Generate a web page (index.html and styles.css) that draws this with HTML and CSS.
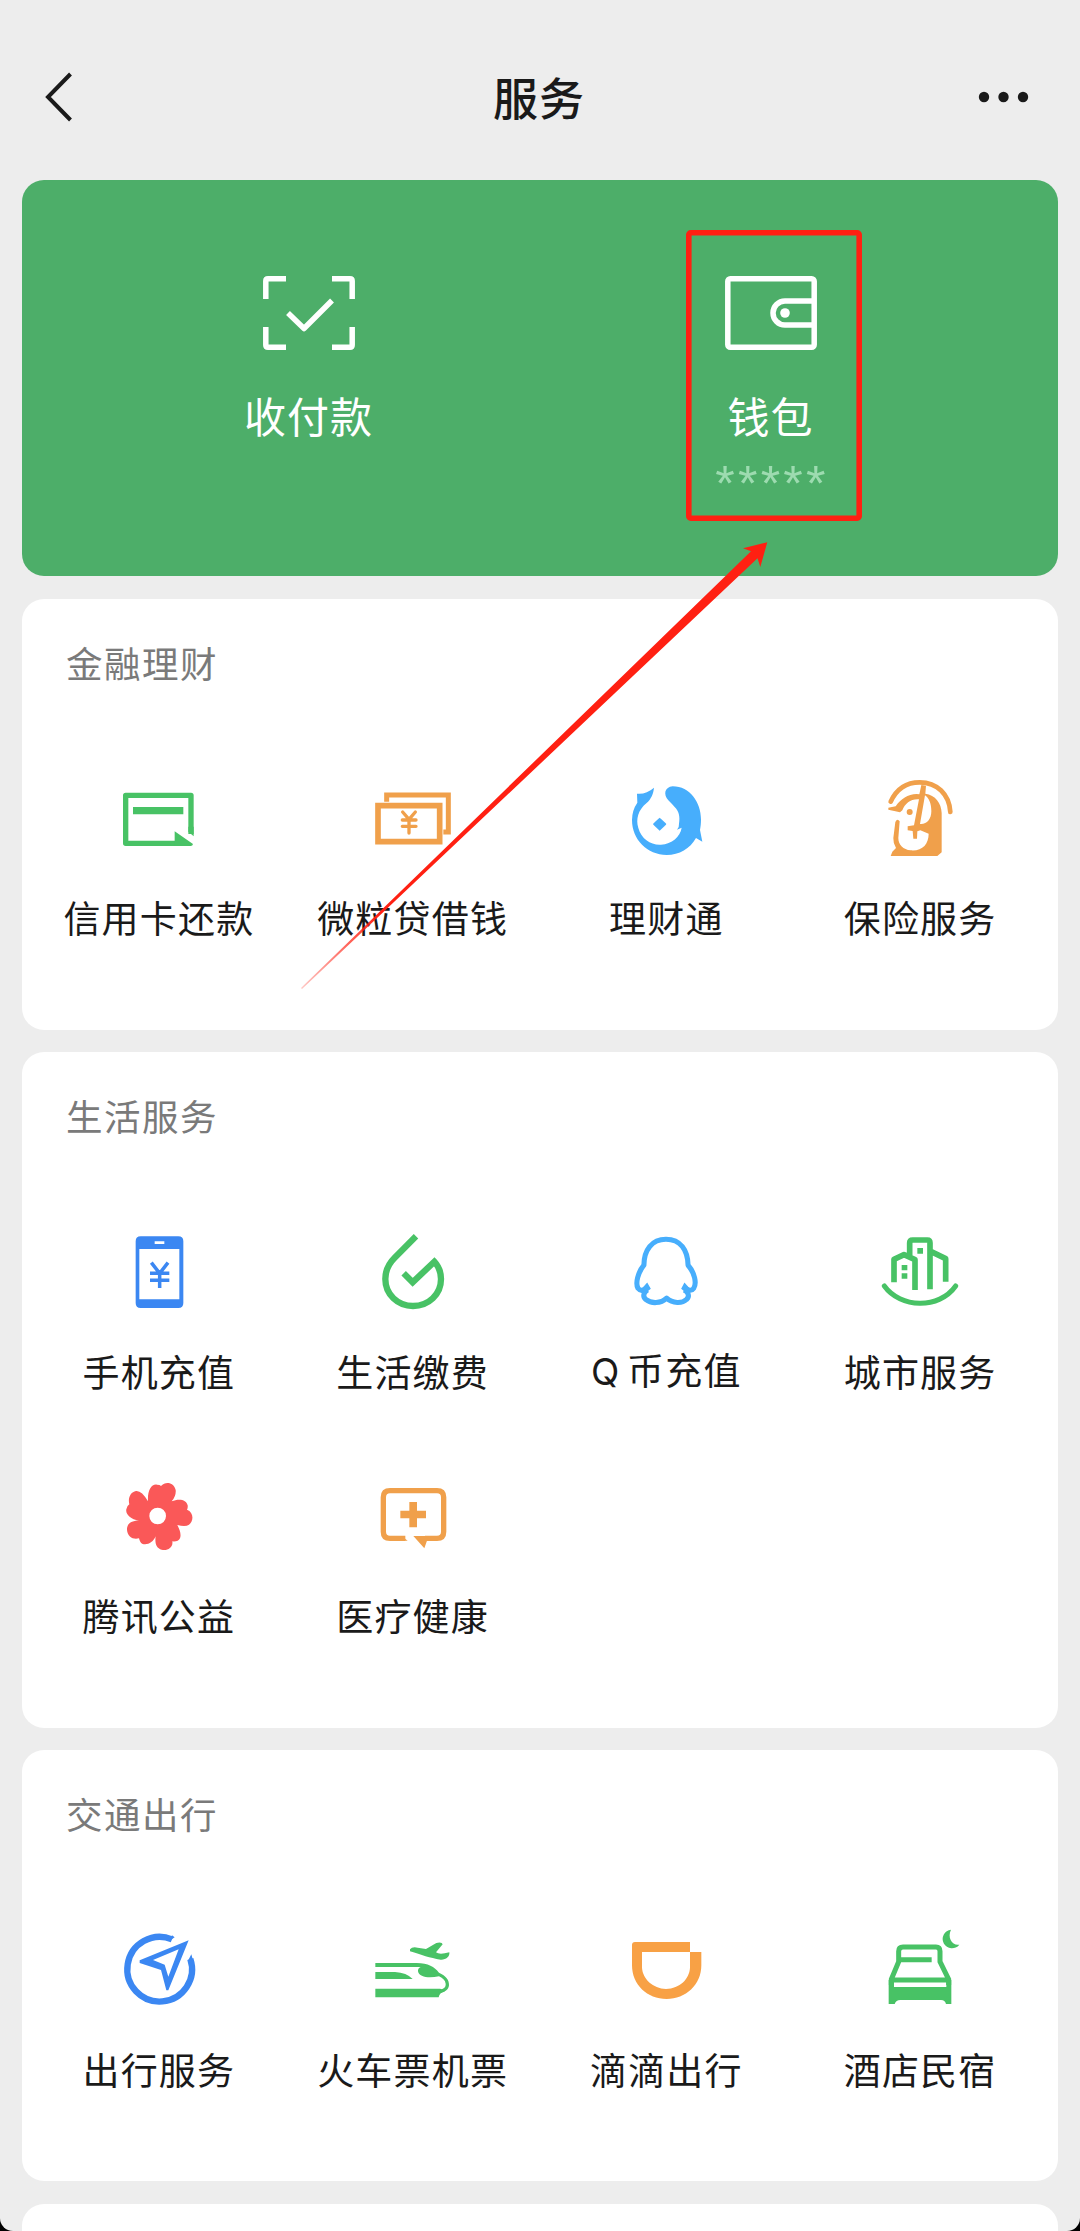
FILE: index.html
```html
<!DOCTYPE html>
<html lang="zh-CN">
<head>
<meta charset="utf-8">
<title>服务</title>
<link rel="stylesheet" href="styles.css">
</head>
<body>
<div class="screen">
  <header class="navbar">
    <svg class="back" viewBox="0 0 30 50"><path d="M26.500 2 4 25 26.500 48"/></svg>
    <h1>服务</h1>
    <svg class="more" viewBox="0 0 52 12"><circle cx="6" cy="6" r="5.200"/><circle cx="25.500" cy="6" r="5.200"/><circle cx="45" cy="6" r="5.200"/></svg>
  </header>

  <main class="cards">
    <section class="hero">
      <div class="hero-item">
        <svg viewBox="0 0 92 74"><path d="M2.800 23V5q0-2.200 2.200-2.200H23M69 2.800H87q2.200 0 2.200 2.200V23M89.200 51V69q0 2.200-2.200 2.200H69M23 71.200H5q-2.200 0-2.200-2.200V51"/><path stroke-linejoin="round" d="M25 37 41 52.500 69 24.500"/></svg>
        <span class="hero-label">收付款</span>
      </div>
      <div class="hero-item">
        <svg viewBox="0 0 92 74"><rect x="2.800" y="2.800" width="86.400" height="68.400" rx="2.500"/><path d="M89 25H60a11.700 11.700 0 0 0 0 24H89"/><circle class="dot" cx="60" cy="37" r="4.800"/></svg>
        <span class="hero-label">钱包</span>
        <span class="balance">*****</span>
      </div>
    </section>

    <section class="card">
      <h2>金融理财</h2>
      <div class="grid">
        <div class="item">
          <svg class="green" viewBox="219 39 270 270"><path class="line" stroke-width="16" stroke-linejoin="round" d="M453 222V106H257V250H410"/><path d="M279 141H430V163H279ZM404 214 459 252Q458 258 452 258H404ZM445 215 461 229V200H445Z"/></svg>
          <span>信用卡还款</span>
        </div>
        <div class="item">
          <svg class="orange" viewBox="981 39 270 270"><path class="line" stroke-width="17" d="M1014 137H1199V245H1014Z"/><path class="line" stroke-width="15" d="M1040 125V105H1225V216H1210"/><path class="line" stroke-width="10" stroke-linecap="round" d="M1088 156 1107 178 1126 156M1107 178V219M1087 180H1128M1087 199H1128"/></svg>
          <span>微粒贷借钱</span>
        </div>
        <div class="item">
          <svg class="sky" viewBox="123 39 270 270"><path d="M225 83C223 102 217 116 202 130C178 150 170 177 178 204C187 237 216 256 246 254C279 251 303 232 308 203L294 209Q301 203 300 191C304 169 299 153 287 141Q279 132 268 121C252 103 257 81 281 79C333 79 366 128 366 178C366 190 365 201 363 210L370 245L351 234C333 266 301 285 263 285C205 284 159 239 159 180Q159 151 175 128L174 101Q201 104 225 83Z"/><path d="M242 173Q262 190 262 192 262 194 242 212 222 194 222 192 222 190 242 173Z"/></svg>
          <span>理财通</span>
        </div>
        <div class="item">
          <svg class="orange" viewBox="884 39 270 270"><path class="line" stroke-width="14" stroke-linecap="round" d="M934 125C951 88 982 67 1021 67C1073 67 1110 103 1113 156"/><path fill-rule="evenodd" d="M927 143 949 139C965 116 985 103 1012 102L1020 103 1026 75 1040 77 1038 101C1068 105 1086 129 1087 159V238Q1087 256 1087 277L1074 288H934L939 275 950 264Q941 249 942 234L948 186Q954 174 961 184L957 234C957 254 972 269 994 271C1028 274 1048 253 1048 221L1023 211 1014 214 1013 236H1002L1000 213 985 211V199L1004 196 1019 118C995 116 977 130 969 151L962 157 927 149ZM1037 106 1022 192C1042 194 1056 178 1056 154C1056 132 1050 115 1037 106Z"/><circle cx="991" cy="156" r="9"/></svg>
          <span>保险服务</span>
        </div>
      </div>
    </section>

    <section class="card tall">
      <h2>生活服务</h2>
      <div class="grid">
        <div class="item">
          <svg class="blue" viewBox="159 51 270 270"><path fill-rule="evenodd" d="M242 79H355Q370 79 370 94V279Q370 294 355 294H242Q227 294 227 279V94Q227 79 242 79ZM238 117V268H358V117ZM284 94V102H313V94Z"/><path class="line" stroke-width="10.500" d="M274 158 299 190 324 158M299 190V234M270 190H328M270 211H328"/></svg>
          <span>手机充值</span>
        </div>
        <div class="item">
          <svg class="green" viewBox="921 51 270 270"><path class="line" stroke-width="19" d="M1068 79 1004 143C984 163 976 182 976 207C976 253 1013 288 1059 288C1106 288 1143 253 1143 207Q1143 177 1123 155L1058 217 1031 190"/></svg>
          <span>生活缴费</span>
        </div>
        <div class="item">
          <svg class="sky" viewBox="123 51 270 270"><path class="line" stroke-width="15.500" stroke-linejoin="round" d="M202 236Q186 250 176 237C168 222 175 190 194 167C194 121 218 88 261 88C305 88 327 121 328 167C348 190 355 222 345 237Q337 249 319 236"/><path class="line" stroke-width="15.500" stroke-linejoin="round" d="M205 242C193 250 189 261 200 271C216 284 245 284 263 267C281 284 311 283 323 271C334 261 329 249 316 242"/><path d="M190 235 204 219 215 238 202 249ZM331 235 317 219 307 238 320 249Z"/></svg>
          <span class="mixed">Q 币充值</span>
        </div>
        <div class="item">
          <svg class="green" viewBox="884 51 270 270"><path class="line" stroke-width="15" stroke-linecap="round" d="M915 228C963 295 1079 299 1129 228"/><path class="line" stroke-width="17" stroke-linejoin="round" d="M944 217V148L974 134 1007 149V240M991 139V99Q991 90 1000 90H1044Q1052 90 1052 99V238M1054 124 1099 146V215"/><path d="M967 165H984V181H967ZM967 190H984V206H967ZM1014 114H1031V131H1014Z"/></svg>
          <span>城市服务</span>
        </div>
        <div class="item">
          <svg class="red" viewBox="159 34 270 270"><path fill-rule="evenodd" d="M264 125C262 93 274 72 291 75Q300 75 303 79C317 63 342 68 347 91Q349 108 335 125C357 115 380 120 383 137Q384 145 381 150C401 157 402 184 387 195Q377 202 352 196C362 215 367 235 353 243Q347 246 337 245C340 264 322 274 305 270C289 265 284 251 287 230C280 247 264 257 248 253Q240 250 237 236C219 241 203 231 201 211C200 194 211 184 237 182C211 180 196 163 199 149Q200 139 208 134C203 114 212 97 228 94Q245 92 264 125ZM293 144A25 25 0 1 0 293 194A25 25 0 1 0 293 144Z"/></svg>
          <span>腾讯公益</span>
        </div>
        <div class="item">
          <svg class="orange" viewBox="921 34 270 270"><path class="line" stroke-width="16" d="M1036 236H990Q970 236 970 216V113Q970 93 990 93H1131Q1151 93 1151 113V216Q1151 236 1131 236H1095"/><path d="M1048 127H1071V153H1098V176H1071V203H1048V176H1021V153H1048ZM1060 229H1106L1093 266ZM1025 229 1043 243H1030Z"/></svg>
          <span>医疗健康</span>
        </div>
      </div>
    </section>

    <section class="card">
      <h2>交通出行</h2>
      <div class="grid">
        <div class="item">
          <svg class="blue" viewBox="159 45 270 270"><path class="line" stroke-width="19" d="M336 88A97 97 0 1 0 391 147"/><path d="M336 76 344 82 329 92ZM384 152 394 133 399 151Z"/><path fill-rule="evenodd" d="M386 91 325 241H319L303 180 239 159V151ZM356 118 279 150 314 164 325 200Z"/></svg>
          <span>出行服务</span>
        </div>
        <div class="item">
          <svg class="green" viewBox="921 45 270 270"><path d="M1050 118Q1057 109 1073 113L1098 117 1129 99Q1146 95 1148 103L1128 127Q1138 135 1168 127C1170 141 1157 150 1142 149C1109 144 1085 135 1050 124ZM946 186H1005Q1040 188 1058 207H946ZM946 236H1141L1154 244Q1138 249 1136 262H946Z"/><path d="M946 159H1070C1105 159 1123 171 1137 188C1158 198 1168 209 1167 226C1166 239 1154 248 1138 249L1133 240C1151 238 1158 232 1157 221Q1155 207 1137 199C1109 205 1077 203 1074 184Q1073 175 1082 171H946Z"/></svg>
          <span>火车票机票</span>
        </div>
        <div class="item">
          <svg class="didi" viewBox="123 45 270 270"><path d="M168 96H333V126H189V173C191 207 222 235 261 237C303 235 331 207 333 173V126H367V166C367 225 320 267 263 267C205 267 159 225 159 166V105Q159 96 168 96Z"/></svg>
          <span>滴滴出行</span>
        </div>
        <div class="item">
          <svg class="green" viewBox="884 45 270 270"><path class="line" stroke-width="15" d="M936 225V208L958 155V124Q958 111 971 111H1070Q1082 111 1082 124V155L1108 208V225M965 149H1057M938 210H1106"/><path d="M928 210H944V231H1101V210H1116V282H1100Q1097 270 1085 270H963Q950 270 946 282H928ZM1115 59A28 28 0 1 0 1140 104C1119 108 1103 83 1115 59Z"/></svg>
          <span>酒店民宿</span>
        </div>
      </div>
    </section>

    <section class="card"></section>
  </main>

  <svg class="annotation" viewBox="0 0 1080 2231">
    <defs><linearGradient id="fade" gradientUnits="userSpaceOnUse" x1="302" y1="988" x2="380" y2="913"><stop offset="0" stop-color="#ff2012" stop-opacity=".25"/><stop offset="1" stop-color="#ff2012"/></linearGradient></defs>
    <rect x="688.800" y="232.800" width="170.400" height="285.400" rx="2"/>
    <path fill="url(#fade)" d="M301 988 751 551.300 743 548.300 767.300 542.300 760.300 567 757.500 558.300 302 989Z"/>
  </svg>
</div>
</body>
</html>
```

FILE: styles.css
```css
* { box-sizing: border-box; }

body {
  margin: 0;
  background: #000;
  font-family: "Noto Sans CJK SC", sans-serif;
  color: #1a1a1a;
}

.screen {
  position: relative;
  height: 2231px;
  overflow: hidden;
  background: #ededed;
  border-radius: 0 0 13px 13px;
}

.navbar {
  height: 180px;
  padding: 14px 50px 0 44px;
  display: grid;
  grid-template-columns: 52px 1fr 52px;
  align-items: center;
}
.navbar h1 {
  margin: 0;
  padding-left: 4px;
  font-size: 45px;
  font-weight: 500;
  line-height: 60px;
  letter-spacing: 1px;
  text-align: center;
}
.back { width: 30px; height: 50px; fill: none; stroke: #1a1a1a; stroke-width: 4; }
.more { width: 52px; height: 12px; fill: #1a1a1a; }

.cards {
  display: flex;
  flex-direction: column;
  gap: 22.500px;
  padding: 0 22px;
}

.hero {
  flex: none;
  height: 396px;
  padding: 96px 56px 0;
  display: grid;
  grid-template-columns: 1fr 1fr;
  border-radius: 22px;
  background: #4dae69;
  color: #fff;
}
.hero-item { display: flex; flex-direction: column; align-items: center; }
.hero-item svg { width: 92px; height: 74px; fill: none; stroke: #fff; stroke-width: 5.500; }
.hero-item .dot { fill: #fff; stroke: none; }
.hero-label { margin-top: 35px; padding-right: 1px; font-size: 42px; line-height: 60px; letter-spacing: 1px; }
.balance {
  margin-top: 19px;
  padding-left: 2px;
  font-family: "Liberation Sans", sans-serif;
  font-size: 50px;
  line-height: 40px;
  letter-spacing: 3.200px;
  color: #9ddbb0;
}

.card {
  flex: none;
  height: 431px;
  padding: 39px 0 0 9px;
  border-radius: 22px;
  background: #fff;
}
.card.tall { height: 675.500px; }
.card h2 {
  margin: 0 0 85.500px 35px;
  font-size: 36.500px;
  font-weight: 400;
  line-height: 50px;
  letter-spacing: 1.500px;
  color: #7a7a7a;
}

.grid {
  display: grid;
  grid-template-columns: repeat(4, 253.750px);
  row-gap: 74.500px;
}
.item {
  display: flex;
  flex-direction: column;
  align-items: center;
  gap: 29px;
  height: 170px;
  font-size: 37px;
  line-height: 50px;
  letter-spacing: 1.200px;
  white-space: nowrap;
}
.item span { padding-left: 2px; }
.item .mixed {
  padding-top: 2px;
  font-family: Inter, "Noto Sans CJK SC", sans-serif;
  word-spacing: -5px;
}
.item svg { width: 90px; height: 90px; fill: currentColor; }
.item .line { fill: none; stroke: currentColor; }

.green { color: #48c265; }
.orange { color: #f0a04b; }
.didi { color: #f8a145; }
.sky { color: #47aefc; }
.blue { color: #3b87f2; }
.red { color: #fa5858; }

.annotation {
  position: absolute;
  inset: 0;
  width: 1080px;
  height: 2231px;
  pointer-events: none;
}
.annotation rect { fill: none; stroke: #ff2012; stroke-width: 5.600; }
```
